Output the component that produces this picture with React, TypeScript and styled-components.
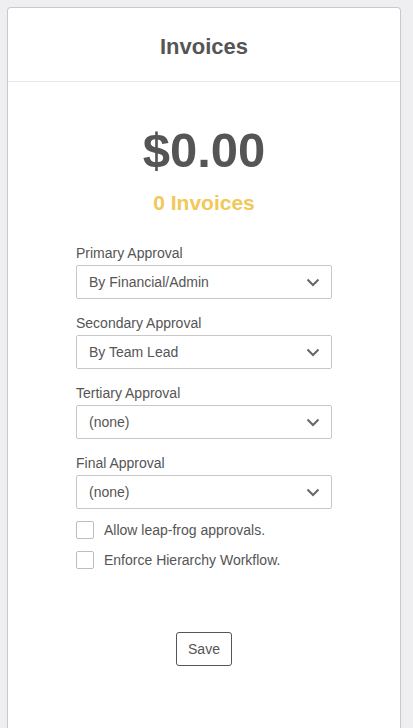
import { createGlobalStyle } from "styled-components";
import styled from "styled-components";

const GlobalStyle = createGlobalStyle`
  html, body {
    margin: 0;
    padding: 0;
    background: #efeff1;
    font-family: "Liberation Sans", Arial, sans-serif;
  }
`;

const Page = styled.div`
  padding: 7px 12px 0 7px;
  height: 728px;
  box-sizing: border-box;
  overflow: hidden;
`;

const Card = styled.div`
  background: #fff;
  border: 1px solid #c9c9c9;
  border-bottom: none;
  border-radius: 4px 4px 0 0;
  height: 100%;
  box-sizing: border-box;
`;

const Header = styled.div`
  height: 74px;
  padding-top: 4px;
  box-sizing: border-box;
  border-bottom: 1px solid #e6e6e6;
  display: flex;
  align-items: center;
  justify-content: center;
`;

const Title = styled.h2`
  margin: 0;
  font-size: 22px;
  font-weight: 700;
  color: #555;
`;

const Body = styled.div`
  display: flex;
  flex-direction: column;
  align-items: center;
  padding-top: 38px;
`;

const Amount = styled.div`
  font-size: 49px;
  font-weight: 700;
  color: #555;
  line-height: 60px;
`;

const Count = styled.div`
  font-size: 21px;
  font-weight: 700;
  color: #f1c85a;
  margin-top: 10px;
  line-height: 26px;
`;

const Form = styled.div`
  width: 256px;
  margin-top: 27px;
  display: flex;
  flex-direction: column;
`;

const Fields = styled.div`
  display: flex;
  flex-direction: column;
  gap: 14px;
`;

const Label = styled.label`
  display: block;
  font-size: 14px;
  color: #555;
  line-height: 20px;
  margin-bottom: 2px;
`;

const SelectBox = styled.div`
  height: 34px;
  box-sizing: border-box;
  border: 1px solid #c8c8c8;
  border-radius: 2px;
  display: flex;
  align-items: center;
  justify-content: space-between;
  padding: 0 11px 0 12px;
  font-size: 14px;
  color: #555;
`;

const Checks = styled.div`
  margin-top: 11px;
  display: flex;
  flex-direction: column;
  gap: 10px;
`;

const CheckRow = styled.div`
  display: flex;
  align-items: center;
  height: 20px;
  font-size: 14px;
  color: #555;
`;

const Box = styled.span`
  width: 18px;
  height: 18px;
  box-sizing: border-box;
  border: 1px solid #bdbdbd;
  border-radius: 2px;
  margin-right: 10px;
`;

const SaveButton = styled.button`
  margin: 62px auto 0;
  width: 56px;
  height: 34px;
  border: 1px solid #555;
  border-radius: 3px;
  background: #fff;
  font-family: "Liberation Sans", Arial, sans-serif;
  font-size: 14px;
  color: #555;
`;

const Chevron = () => (
  <svg width="14" height="9" viewBox="0 0 14 9">
    <path d="M1.5 1.5 L7 7 L12.5 1.5" fill="none" stroke="#666" strokeWidth="2" />
  </svg>
);

const approvals = [
  { label: "Primary Approval", value: "By Financial/Admin" },
  { label: "Secondary Approval", value: "By Team Lead" },
  { label: "Tertiary Approval", value: "(none)" },
  { label: "Final Approval", value: "(none)" },
];

function App() {
  return (
    <>
      <GlobalStyle />
      <Page>
        <Card>
          <Header>
            <Title>Invoices</Title>
          </Header>
          <Body>
            <Amount>$0.00</Amount>
            <Count>0 Invoices</Count>
            <Form>
              <Fields>
                {approvals.map((a) => (
                  <div key={a.label}>
                    <Label>{a.label}</Label>
                    <SelectBox>
                      <span>{a.value}</span>
                      <Chevron />
                    </SelectBox>
                  </div>
                ))}
              </Fields>
              <Checks>
                <CheckRow>
                  <Box />
                  Allow leap-frog approvals.
                </CheckRow>
                <CheckRow>
                  <Box />
                  Enforce Hierarchy Workflow.
                </CheckRow>
              </Checks>
              <SaveButton>Save</SaveButton>
            </Form>
          </Body>
        </Card>
      </Page>
    </>
  );
}

export default App;
